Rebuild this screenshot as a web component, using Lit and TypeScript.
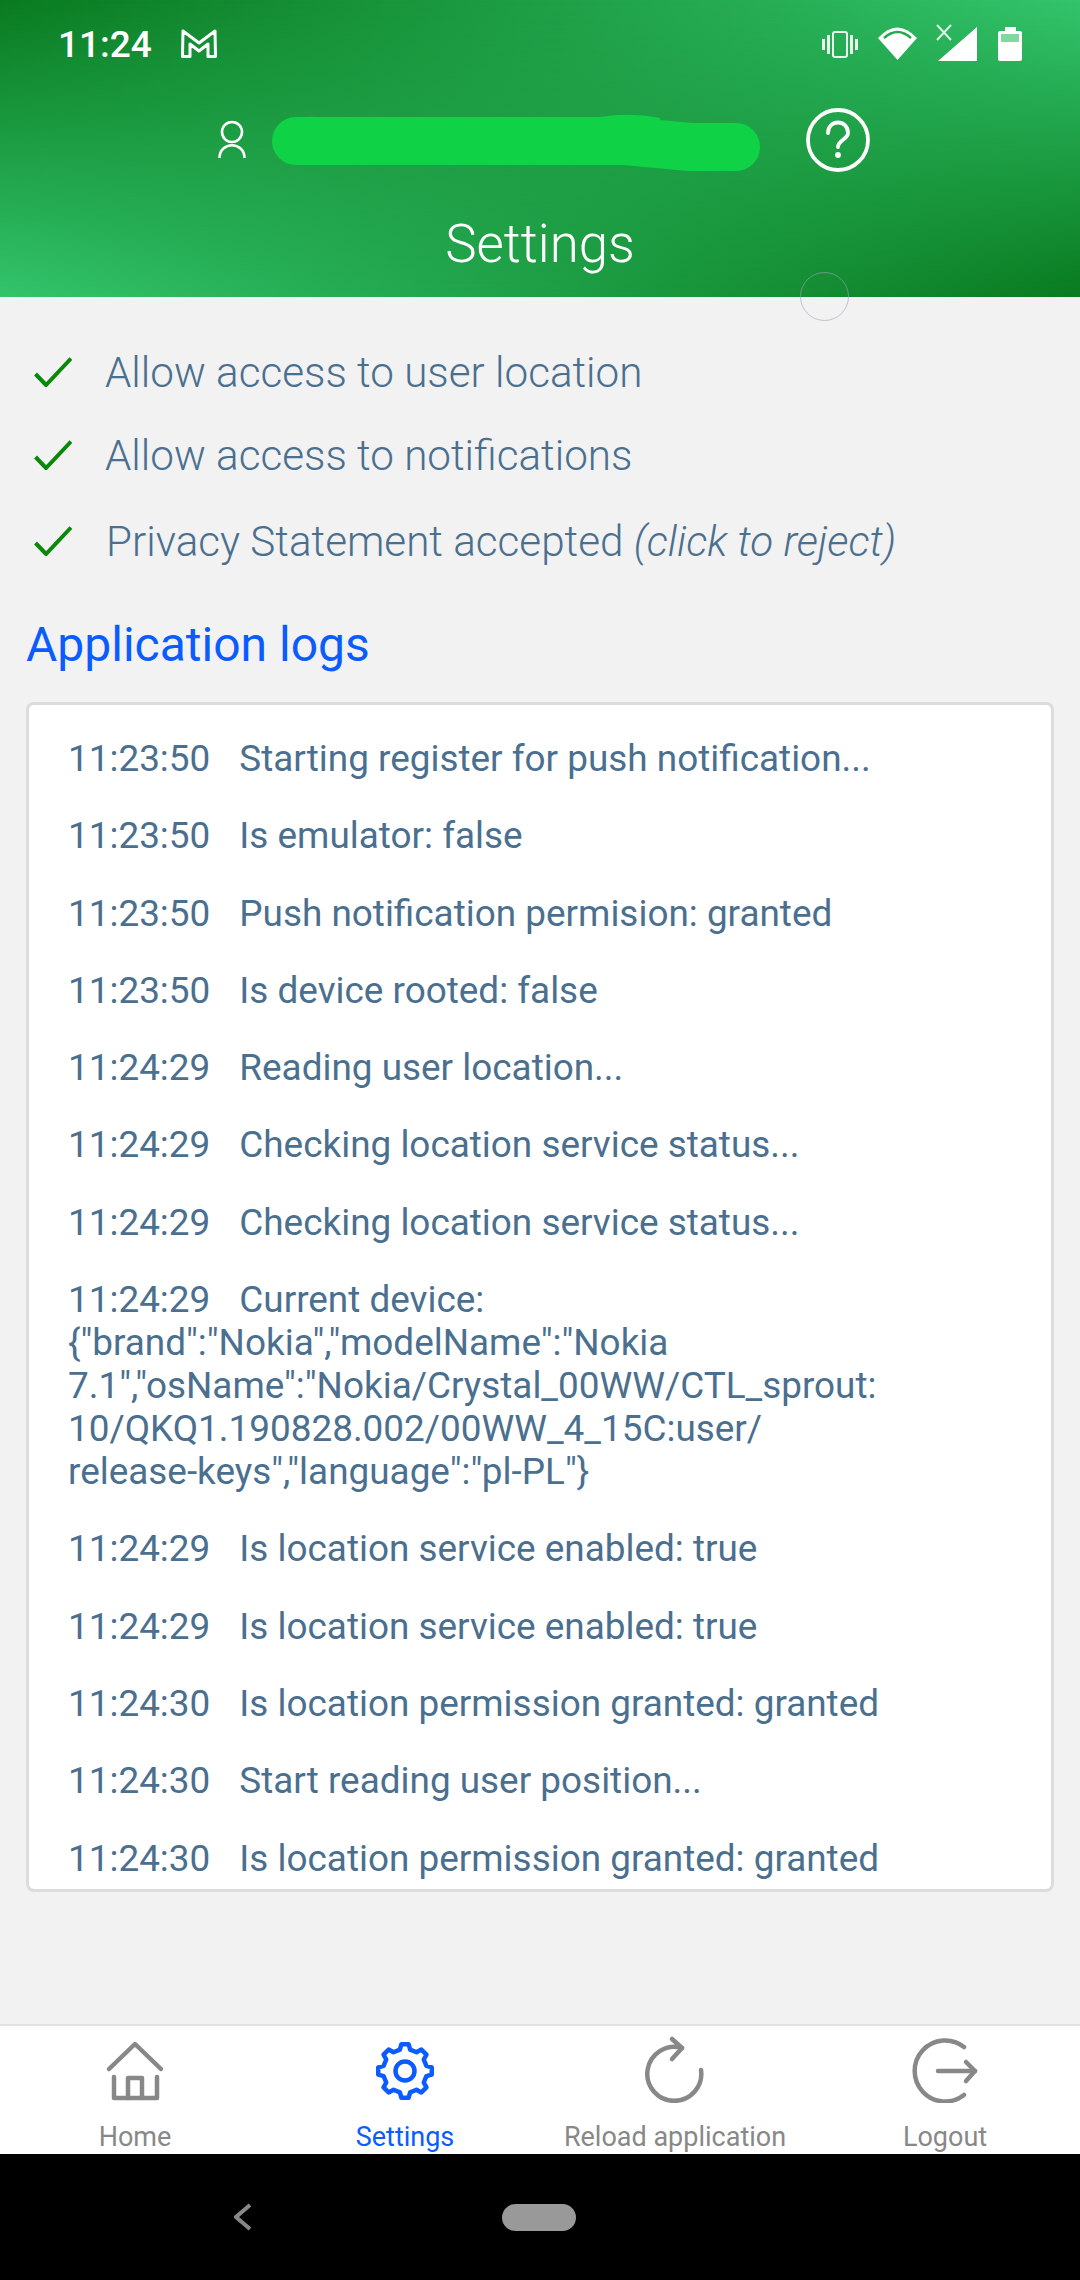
import { LitElement, html, css } from "lit";
import { customElement } from "lit/decorators.js";

const LOGS: [string, string[]][] = [
  ["11:23:50", ["Starting register for push notification..."]],
  ["11:23:50", ["Is emulator: false"]],
  ["11:23:50", ["Push notification permision: granted"]],
  ["11:23:50", ["Is device rooted: false"]],
  ["11:24:29", ["Reading user location..."]],
  ["11:24:29", ["Checking location service status..."]],
  ["11:24:29", ["Checking location service status..."]],
  ["11:24:29", ["Current device:", '{"brand":"Nokia","modelName":"Nokia', '7.1","osName":"Nokia/Crystal_00WW/CTL_sprout:', "10/QKQ1.190828.002/00WW_4_15C:user/", 'release-keys","language":"pl-PL"}']],
  ["11:24:29", ["Is location service enabled: true"]],
  ["11:24:29", ["Is location service enabled: true"]],
  ["11:24:30", ["Is location permission granted: granted"]],
  ["11:24:30", ["Start reading user position..."]],
  ["11:24:30", ["Is location permission granted: granted"]],
];

function gearPath(cx: number, cy: number): string {
  const teeth = 8, rO = 27, rI = 22;
  let d = "";
  for (let i = 0; i < teeth; i++) {
    const a = (i * 2 * Math.PI) / teeth - Math.PI / 2;
    const step = (2 * Math.PI) / teeth;
    const pts: [number, number][] = [
      [rI, a - step * 0.3],
      [rO, a - step * 0.17],
      [rO, a + step * 0.17],
      [rI, a + step * 0.3],
    ];
    pts.forEach(([r, t], j) => {
      const x = (cx + r * Math.cos(t)).toFixed(2);
      const y = (cy + r * Math.sin(t)).toFixed(2);
      d += `${i === 0 && j === 0 ? "M" : "L"}${x} ${y} `;
    });
  }
  return d + "Z";
}

const check = html`<svg class="check" width="38" height="30" viewBox="0 0 38 30"><path d="M1.5 17 L12 28 L37 1.5" fill="none" stroke="#0a880a" stroke-width="4"/></svg>`;

@customElement("app-root")
export class AppRoot extends LitElement {
  static styles = css`
    :host { display: block; width: 1080px; height: 2280px; position: relative; overflow: hidden; background: #f2f2f2; font-family: Roboto, sans-serif; }
    .page { display: flex; flex-direction: column; height: 2280px; }
    .header { height: 297px; flex: none; color: #fff; display: flex; flex-direction: column; position: relative;
      background: linear-gradient(to right, #0a7a20, #33c46c); }
    .header::before { content: ""; position: absolute; inset: 0;
      background: linear-gradient(to right, #33c46c, #0a7a20);
      -webkit-mask-image: linear-gradient(to bottom, transparent, #000);
      mask-image: linear-gradient(to bottom, transparent, #000); }
    .header > * { position: relative; }
    .status { height: 95px; box-sizing: border-box; padding: 0 58px 7px; display: flex; align-items: center; flex: none; }
    .time { font-size: 37px; font-weight: 500; width: 123px; }
    .spacer { flex: 1; }
    .stat-icons { display: block; }
    .user { height: 90px; display: flex; align-items: center; flex: none; padding-left: 218px; }
    .user .scribble { margin-left: 26px; }
    .user .help { margin-left: 45px; }
    .title { text-align: center; font-weight: 300; font-size: 52.8px; line-height: 60px; margin-top: 29px; }
    .content { flex: 1; padding: 0 26px; display: flex; flex-direction: column; min-height: 0; }
    .perm { display: flex; align-items: center; font-weight: 300; font-size: 42.2px; color: #4a6f8f; }
    .perm .check { margin: 0 0 0 8px; flex: none; }
    .perm span { margin-left: 33px; }
    .perm em { font-style: italic; }
    .p1 { margin-top: 46px; height: 58px; }
    .p2 { margin-top: 25px; height: 58px; }
    .p3 { margin-top: 28px; height: 58px; }
    .p3 span { margin-left: 34px; }
    .heading { color: #0a5cff; font-size: 48px; margin-top: 49px; line-height: 52px; }
    .card { margin-top: 31px; height: 1190px; box-sizing: border-box; border: 3px solid #dcdcdc; border-radius: 8px; background: #fff; overflow: hidden; padding: 32px 39px 0; flex: none; }
    .log { font-size: 36.9px; line-height: 43px; color: #4a6f8f; margin-bottom: 34.3px; white-space: nowrap; }
    .log .t { margin-right: 29px; }
    .nav { height: 128px; flex: none; background: #fff; border-top: 2px solid #e2e2e2; display: grid; grid-template-columns: repeat(4, 270px); }
    .nav-item { display: flex; flex-direction: column; align-items: center; color: #888; font-size: 27px; }
    .nav-item.active { color: #0a5cff; }
    .nav-icon { display: block; flex: none; width: 84px; height: 76px; margin-top: 1px; }
    .nav-item span { line-height: 30px; margin-top: 19px; white-space: nowrap; }
    .sysbar { height: 126px; flex: none; background: #000; display: flex; align-items: center; padding-left: 234px; }
    .pill { width: 74px; height: 27px; border-radius: 14px; background: #999; margin-left: 250px; }
    .ring { position: absolute; left: 800px; top: 272px; width: 49px; height: 49px; border-radius: 50%; box-sizing: border-box; border: 1px solid rgba(160,160,190,0.6); }
  `;

  render() {
    return html`
      <div class="page">
        <div class="header">
          <div class="status">
            <div class="time">11:24</div>
            <svg class="stat-icons" width="36" height="30" viewBox="0 0 36 30"><path d="M2 2 L18 14 L34 2 L34.5 27.5 L27 27.5 L27 15 L18 22 L9 15 L9 27.5 L1.5 27.5 Z" fill="none" stroke="#fff" stroke-width="3" stroke-linejoin="round"/></svg>
            <div class="spacer"></div>
            <svg class="stat-icons" width="200" height="40" viewBox="822 24 200 40">
              <g fill="none" stroke="#fff" stroke-width="2" opacity="0.9">
                <rect x="833" y="32" width="14" height="25" rx="2"/>
              </g>
              <g fill="#fff" opacity="0.9">
                <rect x="822" y="39" width="3" height="11"/><rect x="827" y="35" width="3" height="19"/>
                <rect x="850" y="35" width="3" height="19"/><rect x="855" y="39" width="3" height="11"/>
              </g>
              <path d="M878 38 Q897 17 917 38 L897.5 60 Z" fill="#fff"/>
              <path d="M884 38 Q897.5 26 911 38" fill="none" stroke="#2ba552" stroke-width="2.5" />
              <path d="M937 25 L951 40 M951 25 L937 40" stroke="#fff" stroke-width="2" opacity="0.85" fill="none"/>
              <path d="M938 61 L977 27 L977 61 Z" fill="#fff"/>
              <path d="M1005 27 H1016 V31 H1020 Q1022 31 1022 33 V59 Q1022 61 1020 61 H1000 Q998 61 998 59 V33 Q998 31 1000 31 H1005 Z" fill="#fff"/>
              <rect x="1001" y="34" width="18" height="8" fill="#7fd9a0"/>
            </svg>
          </div>
          <div class="user">
            <svg width="28" height="40" viewBox="0 0 28 40"><g fill="none" stroke="#fff" stroke-width="2.6"><circle cx="14" cy="12" r="10"/><path d="M1.5 38 C1.5 21 26.5 21 26.5 38"/></g></svg>
            <svg class="scribble" width="488" height="76" viewBox="272 102 488 76"><path d="M296 141 L625 141 L690 147 L736 147" fill="none" stroke="#10d246" stroke-width="48" stroke-linecap="round" stroke-linejoin="round"/><path d="M300 120 Q290 116 320 117 L600 117 Q630 112 660 118 L660 150 L300 150 Z" fill="#10d246"/></svg>
            <svg class="help" width="66" height="66" viewBox="0 0 66 66"><circle cx="33" cy="33" r="30" fill="none" stroke="#fff" stroke-width="3.8"/><path d="M23 26 C23 12 43 12 43 26 C43 32 33 33 33 40" fill="none" stroke="#fff" stroke-width="3.8" stroke-linecap="round"/><circle cx="33" cy="48" r="2.9" fill="#fff"/></svg>
          </div>
          <div class="title">Settings</div>
        </div>
        <div class="content">
          <div class="perm p1">${check}<span>Allow access to user location</span></div>
          <div class="perm p2">${check}<span>Allow access to notifications</span></div>
          <div class="perm p3">${check}<span>Privacy Statement accepted <em>(click to reject)</em></span></div>
          <div class="heading">Application logs</div>
          <div class="card">
            ${LOGS.map(([t, lines]) => html`<div class="log"><span class="t">${t}</span>${lines.map((l, i) => i ? html`<br>${l}` : l)}</div>`)}
          </div>
        </div>
        <div class="nav">
          <div class="nav-item">
            <svg class="nav-icon" viewBox="93 2027 84 76">
              <g fill="none" stroke="#888" stroke-width="4.5" stroke-linecap="round" stroke-linejoin="round">
                <path d="M109 2069 L135 2044 L161 2069"/>
                <path d="M114 2077 V2098 H157 V2077"/>
                <path d="M128 2098 V2078 H142 V2098"/>
              </g>
            </svg>
            <span>Home</span>
          </div>
          <div class="nav-item active">
            <svg class="nav-icon" viewBox="363 2027 84 76">
              <path d="${gearPath(405, 2071)}" fill="none" stroke="#0a5cff" stroke-width="4.5" stroke-linejoin="round"/>
              <circle cx="405" cy="2071" r="9.5" fill="none" stroke="#0a5cff" stroke-width="4.5"/>
            </svg>
            <span>Settings</span>
          </div>
          <div class="nav-item">
            <svg class="nav-icon" viewBox="633 2027 84 76">
              <g fill="none" stroke="#888" stroke-width="4.5" stroke-linecap="round" stroke-linejoin="round">
                <path d="M701 2070 A27 27 0 1 1 682 2048"/>
                <path d="M672 2039 L682 2048 L672 2059"/>
              </g>
            </svg>
            <span>Reload application</span>
          </div>
          <div class="nav-item">
            <svg class="nav-icon" viewBox="903 2027 84 76">
              <g fill="none" stroke="#888" stroke-width="4.5" stroke-linecap="round" stroke-linejoin="round">
                <path d="M964 2047 A30.5 30.5 0 1 0 964 2095"/>
                <path d="M938 2071 H975"/>
                <path d="M966 2062 L975 2071 L966 2081"/>
              </g>
            </svg>
            <span>Logout</span>
          </div>
        </div>
        <div class="sysbar">
          <svg width="18" height="28" viewBox="0 0 18 28"><path d="M16 2 L2 14 L16 26" fill="none" stroke="#888" stroke-width="4"/></svg>
          <div class="pill"></div>
        </div>
      </div>
      <div class="ring"></div>
    `;
  }
}
